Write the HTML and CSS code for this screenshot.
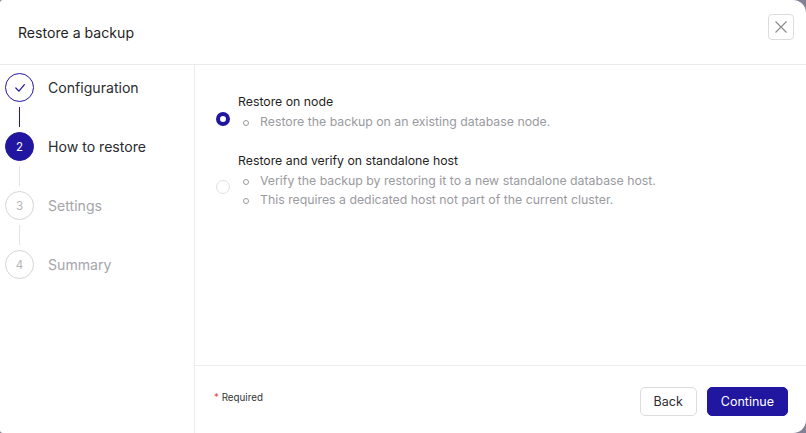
FILE: index.html
```html
<!DOCTYPE html>
<html>
<head>
<meta charset="utf-8">
<link rel="stylesheet" href="styles.css">
</head>
<body>
<div class="modal">
  <header class="modal-header">
    <h1 class="title">Restore a backup</h1>
    <button class="close" aria-label="Close">
      <svg width="14" height="14" viewBox="0 0 14 14"><path d="M1.5 1.5 L12.5 12.5 M12.5 1.5 L1.5 12.5" stroke="#8a8a8a" stroke-width="1.1" fill="none"/></svg>
    </button>
  </header>
  <div class="modal-body">
    <nav class="steps">
      <div class="step done">
        <div class="marker">
          <span class="circle"><svg width="14" height="14" viewBox="0 0 14 14"><path d="M2.8 7 L5.9 10.2 L11.4 3.6" stroke="#21169f" stroke-width="1.2" fill="none" stroke-linecap="round" stroke-linejoin="round"/></svg></span>
          <span class="line"></span>
        </div>
        <span class="label">Configuration</span>
      </div>
      <div class="step active">
        <div class="marker">
          <span class="circle">2</span>
          <span class="line"></span>
        </div>
        <span class="label">How to restore</span>
      </div>
      <div class="step">
        <div class="marker">
          <span class="circle">3</span>
          <span class="line"></span>
        </div>
        <span class="label">Settings</span>
      </div>
      <div class="step last">
        <div class="marker">
          <span class="circle">4</span>
        </div>
        <span class="label">Summary</span>
      </div>
    </nav>
    <section class="main">
      <div class="content">
        <label class="option">
          <span class="radio checked"></span>
          <div class="option-text">
            <div class="option-title">Restore on node</div>
            <ul class="option-desc">
              <li>Restore the backup on an existing database node.</li>
            </ul>
          </div>
        </label>
        <label class="option">
          <span class="radio"></span>
          <div class="option-text">
            <div class="option-title">Restore and verify on standalone host</div>
            <ul class="option-desc">
              <li>Verify the backup by restoring it to a new standalone database host.</li>
              <li>This requires a dedicated host not part of the current cluster.</li>
            </ul>
          </div>
        </label>
      </div>
      <footer class="footer">
        <span class="required"><span class="star">*</span> Required</span>
        <div class="actions">
          <button class="btn">Back</button>
          <button class="btn primary">Continue</button>
        </div>
      </footer>
    </section>
  </div>
</div>
</body>
</html>
```
FILE: styles.css
```css
* { box-sizing: border-box; }
html, body { margin: 0; padding: 0; }
body {
  width: 806px;
  height: 433px;
  background: #837f94;
  font-family: Inter, "Noto Sans", sans-serif;
  overflow: hidden;
}
.modal {
  width: 806px;
  height: 433px;
  background: #fff;
  border-radius: 3px 13px 13px 3px;
  display: flex;
  flex-direction: column;
  overflow: hidden;
}
.modal-header {
  height: 65px;
  flex: none;
  border-bottom: 1px solid #e9e9ee;
  display: flex;
  align-items: center;
  justify-content: space-between;
  padding: 0 12px 0 18px;
}
.title {
  margin: 0;
  font-size: 14.1px;
  font-weight: 400;
  color: #1f1f24;
}
.close {
  width: 26px;
  height: 26px;
  border: 1px solid #dcdce0;
  border-radius: 4px;
  background: #fff;
  padding: 0;
  display: flex;
  align-items: center;
  justify-content: center;
  margin-top: -10px;
}
.modal-body {
  flex: 1;
  display: flex;
  min-height: 0;
}
.steps {
  width: 195px;
  flex: none;
  border-right: 1px solid #ececf0;
  padding: 8px 0 0 5px;
}
.step {
  display: flex;
  align-items: flex-start;
  gap: 14px;
}
.marker {
  width: 29px;
  display: flex;
  flex-direction: column;
  align-items: center;
}
.circle {
  width: 29px;
  height: 29px;
  border-radius: 50%;
  border: 1px solid #d4d4da;
  color: #b4b4ba;
  font-size: 11.5px;
  display: flex;
  align-items: center;
  justify-content: center;
}
.line {
  width: 1px;
  height: 20px;
  margin: 5px 0 5px;
  background: #e3e3e8;
}
.label {
  font-size: 14.1px;
  color: #a5a5ab;
  line-height: 29px;
}
.step.done .circle { border-color: #21169f; }
.step.done .line { background: #21169f; }
.step.done .label { color: #2c2c31; }
.step.active .circle { background: #21169f; border-color: #21169f; color: #fff; }
.step.active .label { color: #2c2c31; }
.main {
  flex: 1;
  display: flex;
  flex-direction: column;
  min-width: 0;
}
.content {
  flex: 1;
  padding: 27px 20px 0 21px;
  display: flex;
  flex-direction: column;
  gap: 19px;
}
.option {
  display: flex;
  align-items: center;
  gap: 8px;
}
.radio {
  width: 14px;
  height: 14px;
  border-radius: 50%;
  border: 1px solid #e0e0e4;
  flex: none;
  margin-top: 14px;
}
.radio.checked {
  border: 4px solid #21169f;
  background: #fff;
}
.option-text { font-size: 12.3px; }
.option-title {
  color: #1f1f24;
  line-height: 19px;
}
.option-desc {
  margin: 1px 0 0;
  padding: 0 0 0 22px;
  list-style: none;
  color: #9a9aa0;
}
.option-desc li {
  line-height: 19.5px;
  position: relative;
}
.option-desc li::before {
  content: "";
  position: absolute;
  left: -17px;
  top: 8px;
  width: 4px;
  height: 4px;
  border: 1px solid #9a9aa0;
  border-radius: 50%;
}
.footer {
  height: 68px;
  flex: none;
  border-top: 1px solid #ececf0;
  display: flex;
  align-items: center;
  justify-content: space-between;
  padding: 4px 18px 0 19px;
}
.required {
  font-size: 9.8px;
  color: #333;
  margin-top: -8px;
}
.star { color: #e5484d; }
.actions {
  display: flex;
  gap: 10px;
}
.btn {
  height: 29px;
  padding: 0 13px;
  border-radius: 5px;
  border: 1px solid #dcdce0;
  background: #fff;
  font-family: Inter, "Noto Sans", sans-serif;
  font-size: 12.5px;
  color: #2c2c31;
}
.btn.primary {
  background: #21169f;
  border-color: #21169f;
  color: #fff;
  padding: 0 13px;
}
```
